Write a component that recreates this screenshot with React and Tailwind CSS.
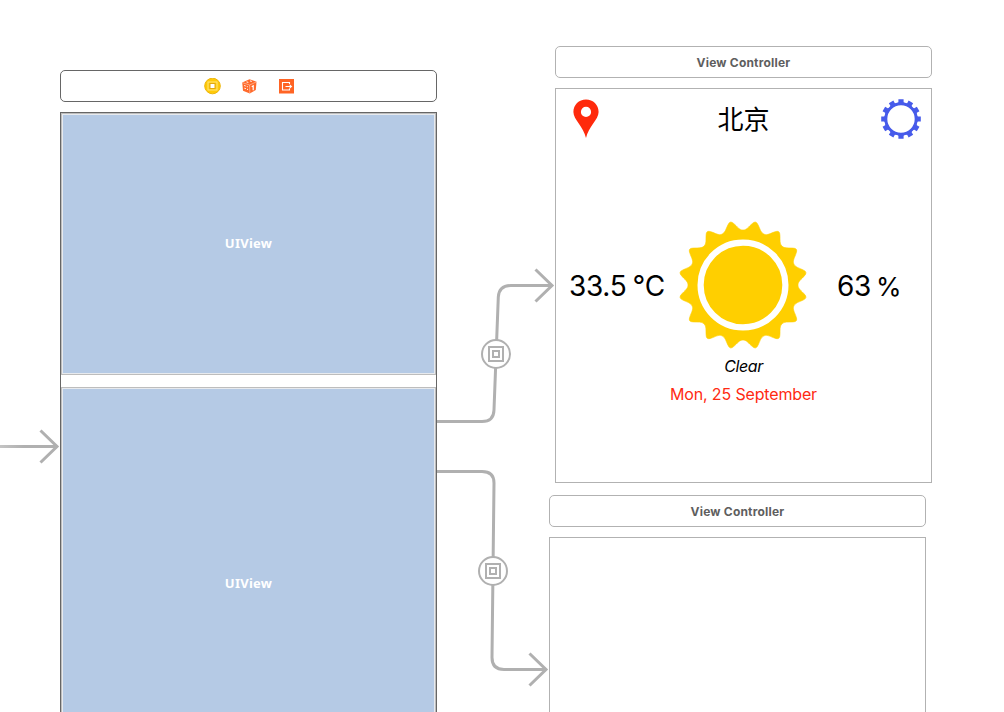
import React from "react";

const polar = (r, deg) => {
  const a = (deg * Math.PI) / 180;
  return [(r * Math.sin(a)).toFixed(2), (-r * Math.cos(a)).toFixed(2)].join(" ");
};

const STEP = 22.5;
const sunPath =
  `M${polar(55, 0)}` +
  Array.from({ length: 16 }, (_, i) => {
    const tip = i * STEP + STEP / 2;
    return `C${polar(55, tip - 7.5)} ${polar(59, tip - 5.5)} ${polar(62, tip - 2.8)}Q${polar(66.4, tip)} ${polar(62, tip + 2.8)}C${polar(59, tip + 5.5)} ${polar(55, tip + 7.5)} ${polar(55, tip + 11.25)}`;
  }).join("") +
  "Z";

function Sun() {
  return (
    <svg className="h-[130px] w-[130px]" viewBox="-65 -65 130 130">
      <path d={sunPath} fill="#ffcf00" stroke="#ffcf00" strokeWidth="0.6" strokeLinejoin="round" />
      <circle r="42.400" fill="none" stroke="#fff" strokeWidth="6.200" />
    </svg>
  );
}

function Pin() {
  return (
    <svg className="h-10 w-[26px]" viewBox="0 0 26 40">
      <path
        fillRule="evenodd"
        fill="#ff2a0c"
        d="M13 .5C5.900 .5.400 6 .400 12.900C.400 20.500 10.500 27.500 13 39C15.500 27.500 25.600 20.500 25.600 12.900C25.600 6 20.100.5 13 .5ZM13 7.800a5.100 5.100 0 1 1 0 10.200a5.100 5.100 0 0 1 0-10.200Z"
      />
    </svg>
  );
}

function Gear() {
  return (
    <svg className="h-10 w-10" viewBox="-20 -20 40 40">
      <circle r="15.200" fill="none" stroke="#475bea" strokeWidth="3" />
      {Array.from({ length: 12 }, (_, i) => (
        <path key={i} d="M-2.600-19.800H2.600V-16.800L4-15H-4L-2.600-16.800Z" fill="#475bea" transform={`rotate(${i * 30})`} />
      ))}
    </svg>
  );
}

function ControllerIcon() {
  return (
    <svg className="h-[17px] w-[17px]" viewBox="0 0 17 17">
      <circle cx="8.500" cy="8" r="7.800" fill="#ffca08" stroke="#edb50c" />
      <rect x="4" y="4" width="9" height="8" fill="none" stroke="#ffe478" />
      <rect x="6" y="5.500" width="5" height="5" fill="#fff" stroke="#e3a90c" />
    </svg>
  );
}

function ResponderIcon() {
  return (
    <svg className="h-[15px] w-[15px]" viewBox="0 0 15 15">
      <path d="M7.500.2L14.500 2.700L13.800 11L7.800 14.600L1 11.800L.200 3.500Z" fill="#ff6a2b" />
      <path d="M.500 3.700L7.600 6L14.400 2.900M7.600 6L7.800 14.300" fill="none" stroke="#ffd2bd" strokeWidth=".6" />
      <path d="M4.500 2.900l1.800.5M8 1.900l1.800.5M2.200 6.500l1.500.5M4.800 7.500l1 .3M2.400 9.200l1.500.5M5 10.200l1 .3" stroke="#fff" strokeWidth="1" />
      <path d="M9.700 7.800l1.500-.9v4.300" fill="none" stroke="#fff" strokeWidth="1.200" />
    </svg>
  );
}

function ExitIcon() {
  return (
    <svg className="h-[15px] w-[15px]" viewBox="0 0 15 15">
      <rect width="15" height="14.500" fill="#ff6424" />
      <path d="M10.500 5V3.500H3.500V11H10.500V9.500M6.500 7.500H12" fill="none" stroke="#fff" strokeWidth="1.100" />
      <path d="M10.700 5.300L13.300 7.500L10.700 9.700Z" fill="#fff" />
    </svg>
  );
}

function SegueBadge({ x, y }) {
  return (
    <g transform={`translate(${x} ${y})`} stroke="#b0b0b0" strokeWidth="2" fill="#fff">
      <circle r="14" />
      <rect x="-7" y="-7" width="14" height="14" />
      <rect x="-3" y="-3" width="6" height="6" />
    </g>
  );
}

function Segues() {
  return (
    <svg className="pointer-events-none absolute inset-0 h-[712px] w-[1004px]" viewBox="0 0 1004 712">
      <defs>
        <linearGradient id="entry" gradientUnits="userSpaceOnUse" x1="0" y1="0" x2="24" y2="0">
          <stop offset="0" stopColor="#c4c4c4" />
          <stop offset="1" stopColor="#b0b0b0" />
        </linearGradient>
      </defs>
      <g fill="none" stroke="#b0b0b0" strokeWidth="3">
        <rect x="0" y="445" width="57" height="3" fill="url(#entry)" stroke="none" />
        <path d="M40.500 430.500L57 446.500L40.500 462.500" />
        <path d="M437 421.500H482Q493.700 421.500 494 410L498.300 297Q499 285.500 511 285.500H551" />
        <path d="M535.500 269.500L552 285.500L535.500 301.500" />
        <path d="M437 471.500H482Q494 471.500 494 483L492 657.500Q492 669.500 504 669.500H545" />
        <path d="M529.500 653.500L546 669.500L529.500 685.500" />
      </g>
      <SegueBadge x={496} y={354} />
      <SegueBadge x={493} y={571} />
    </svg>
  );
}

function TitleBar() {
  return (
    <header className="flex h-8 shrink-0 items-center justify-center rounded-[5px] border border-[#b2b2b2] bg-white pt-0.5 text-[12px] font-bold tracking-[0.2px] text-[#5e5e5e]">
      View Controller
    </header>
  );
}

function Container({ className }) {
  return (
    <div className={`flex shrink-0 border border-[#bdbdbd] ${className}`}>
      <div className="flex flex-1 items-center justify-center border border-[#e7eaee] bg-[#b5cae5] font-['Noto_Sans',sans-serif] text-[13px] font-bold tracking-[0.25px] text-white">
        UIView
      </div>
    </div>
  );
}

export default function App() {
  return (
    <main className="relative h-[712px] w-[1004px] overflow-hidden bg-white font-['Inter','Noto_Sans_CJK_SC',sans-serif] text-black">
      <section className="absolute left-[60px] top-[70px] flex w-[377px] flex-col gap-2.5">
        <header className="flex h-8 items-center justify-center gap-[21px] rounded-[5px] border border-[#666] bg-white">
          <ControllerIcon />
          <ResponderIcon />
          <span className="-mr-px ml-px"><ExitIcon /></span>
        </header>
        <div className="flex h-[669px] flex-col gap-3 border border-[#666] bg-white">
          <Container className="h-[262px]" />
          <Container className="h-[393px]" />
        </div>
      </section>

      <section className="absolute left-[555px] top-[46px] flex w-[377px] flex-col gap-2.5">
        <TitleBar />
        <div className="flex h-[395px] flex-col border border-[#b2b2b2] bg-white">
          <div className="flex h-[60px] shrink-0 items-center justify-between pl-[17px] pr-2.5">
            <Pin />
            <h1 className="ml-[7px] w-[60px] pb-0.5 text-center font-['Noto_Sans_CJK_SC',sans-serif] text-[26px] leading-[30px]">北京</h1>
            <Gear />
          </div>
          <div className="mt-[70px] flex h-[132px] shrink-0 items-center">
            <span className="w-[109px] whitespace-pre pl-[13px] pt-0.5 text-[28px] tracking-[-0.3px] [word-spacing:-1.5px]">33.5 °C</span>
            <span className="ml-[13px]"><Sun /></span>
            <span className="ml-[29px] flex items-baseline gap-[5px] pt-0.5 text-[28px] tracking-[-0.3px]">
              <span>63</span>
              <span className="text-[26px]">%</span>
            </span>
          </div>
          <p className="mt-[3px] text-center text-[16px] italic leading-6 tracking-[-0.4px]">Clear</p>
          <p className="mt-1 text-center text-[16px] leading-6 tracking-[-0.15px] text-[#ff2a12]">Mon, 25 September</p>
        </div>
      </section>

      <section className="absolute left-[549px] top-[495px] flex w-[377px] flex-col gap-2.5">
        <TitleBar />
        <div className="h-[395px] border border-[#b2b2b2] bg-white" />
      </section>

      <Segues />
    </main>
  );
}
